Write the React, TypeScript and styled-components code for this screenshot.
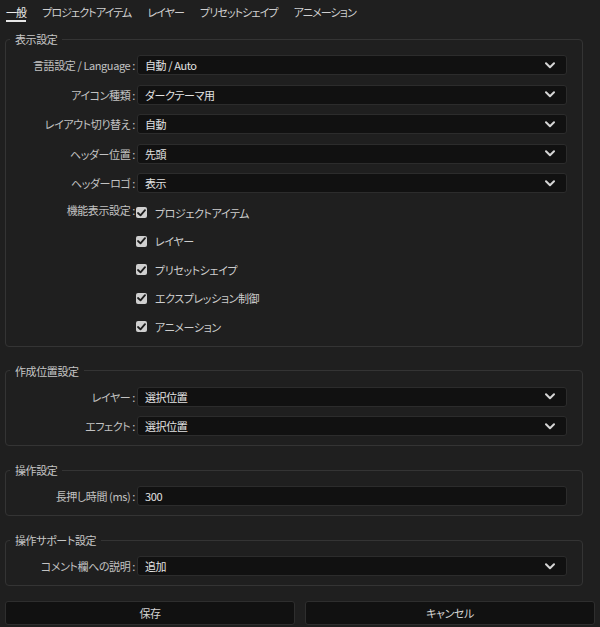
import React from 'react'
import styled, { createGlobalStyle } from 'styled-components'

const GlobalStyle = createGlobalStyle`
  html, body {
    margin: 0;
    padding: 0;
    background: #1f1f1f;
  }
  body {
    font-family: "Noto Sans CJK JP", "Noto Sans", sans-serif;
    font-size: 11px;
    color: #c8c8c8;
    font-feature-settings: "palt";
    letter-spacing: -0.4px;
  }
`

const Page = styled.div`
  width: 600px;
  height: 627px;
  box-sizing: border-box;
  padding: 0 5px 5px;
  display: flex;
  flex-direction: column;
  background: #1f1f1f;
`

const TabBar = styled.div`
  display: flex;
  gap: 16px;
  padding-left: 1px;
  height: 22px;
`

const Tab = styled.div<{ $active?: boolean }>`
  padding-top: 4px;
  line-height: 16px;
  height: 16px;
  letter-spacing: -0.9px;
  color: ${p => (p.$active ? '#ececec' : '#cfcfcf')};
  border-bottom: 2px solid ${p => (p.$active ? '#e6e6e6' : 'transparent')};
`

const Group = styled.fieldset`
  margin: 16px 12px 0 0;
  padding: 8px 15px 9px 0;
  border: 1px solid #343434;
  border-radius: 4px;
  min-width: 0;
  display: flex;
  flex-direction: column;
  gap: 9.5px;

  &:first-of-type {
    margin-top: 9px;
  }
`

const Legend = styled.legend`
  margin-left: 4px;
  padding: 0 5px;
  line-height: 16px;
  color: #c6c6c6;
`

const Row = styled.div`
  display: grid;
  grid-template-columns: 129px 1fr;
  column-gap: 2px;
  align-items: center;
`

const Label = styled.div`
  text-align: right;
  white-space: nowrap;
  line-height: 20px;
  color: #c2c2c2;
  align-self: start;
`

const CheckLabel = styled(Label)`
  margin-top: -3px;
`

const Field = styled.div`
  height: 20px;
  box-sizing: border-box;
  border: 1px solid #2c2c2c;
  border-radius: 3px;
  background: #111111;
  padding: 0 11px 0 7px;
  display: flex;
  align-items: center;
  justify-content: space-between;
  color: #e2e2e2;
  line-height: 18px;
`

const CheckList = styled.div`
  display: flex;
  flex-direction: column;
  gap: 8.5px;
  margin-left: -1px;
`

const CheckItem = styled.label`
  height: 20px;
  display: flex;
  align-items: center;
  gap: 8px;
  color: #cdcdcd;
`

const Box = styled.span`
  width: 11px;
  height: 11px;
  border-radius: 2px;
  background: #cfcfcf;
  display: flex;
  align-items: center;
  justify-content: center;
`

const Buttons = styled.div`
  display: grid;
  grid-template-columns: 1fr 1fr;
  column-gap: 10px;
  margin-top: 15px;
`

const Button = styled.button`
  height: 24px;
  border: 1px solid #2e2e2e;
  border-radius: 3px;
  background: #111111;
  color: #d4d4d4;
  font-family: inherit;
  font-size: 11px;
  font-feature-settings: "palt";
  letter-spacing: -0.4px;
  padding: 0;
`

const Chevron = () => (
  <svg width="10" height="7" viewBox="0 0 10 7">
    <polyline points="1,1.2 5,5.2 9,1.2" fill="none" stroke="#d6d6d6" strokeWidth="2" strokeLinecap="round" strokeLinejoin="round" />
  </svg>
)

const Check = () => (
  <svg width="9" height="8" viewBox="0 0 9 8">
    <polyline points="1,4 3.5,6.4 8,1.2" fill="none" stroke="#1c1c1c" strokeWidth="1.8" strokeLinecap="round" strokeLinejoin="round" />
  </svg>
)

const SelectRow: React.FC<{ label: string; value: string; arrow?: boolean }> = ({ label, value, arrow = true }) => (
  <Row>
    <Label>{label}</Label>
    <Field>
      <span>{value}</span>
      {arrow && <Chevron />}
    </Field>
  </Row>
)

const features = ['プロジェクトアイテム', 'レイヤー', 'プリセットシェイプ', 'エクスプレッション制御', 'アニメーション']

export default function App() {
  return (
    <Page>
      <GlobalStyle />
      <TabBar>
        <Tab $active>一般</Tab>
        <Tab>プロジェクトアイテム</Tab>
        <Tab>レイヤー</Tab>
        <Tab>プリセットシェイプ</Tab>
        <Tab>アニメーション</Tab>
      </TabBar>

      <Group>
        <Legend>表示設定</Legend>
        <SelectRow label="言語設定 / Language :" value="自動 / Auto" />
        <SelectRow label="アイコン種類 :" value="ダークテーマ用" />
        <SelectRow label="レイアウト切り替え :" value="自動" />
        <SelectRow label="ヘッダー位置 :" value="先頭" />
        <SelectRow label="ヘッダーロゴ :" value="表示" />
        <Row>
          <CheckLabel>機能表示設定 :</CheckLabel>
          <CheckList>
            {features.map(f => (
              <CheckItem key={f}>
                <Box><Check /></Box>
                {f}
              </CheckItem>
            ))}
          </CheckList>
        </Row>
      </Group>

      <Group>
        <Legend>作成位置設定</Legend>
        <SelectRow label="レイヤー :" value="選択位置" />
        <SelectRow label="エフェクト :" value="選択位置" />
      </Group>

      <Group>
        <Legend>操作設定</Legend>
        <SelectRow label="長押し時間 (ms) :" value="300" arrow={false} />
      </Group>

      <Group>
        <Legend>操作サポート設定</Legend>
        <SelectRow label="コメント欄への説明 :" value="追加" />
      </Group>

      <Buttons>
        <Button>保存</Button>
        <Button>キャンセル</Button>
      </Buttons>
    </Page>
  )
}
